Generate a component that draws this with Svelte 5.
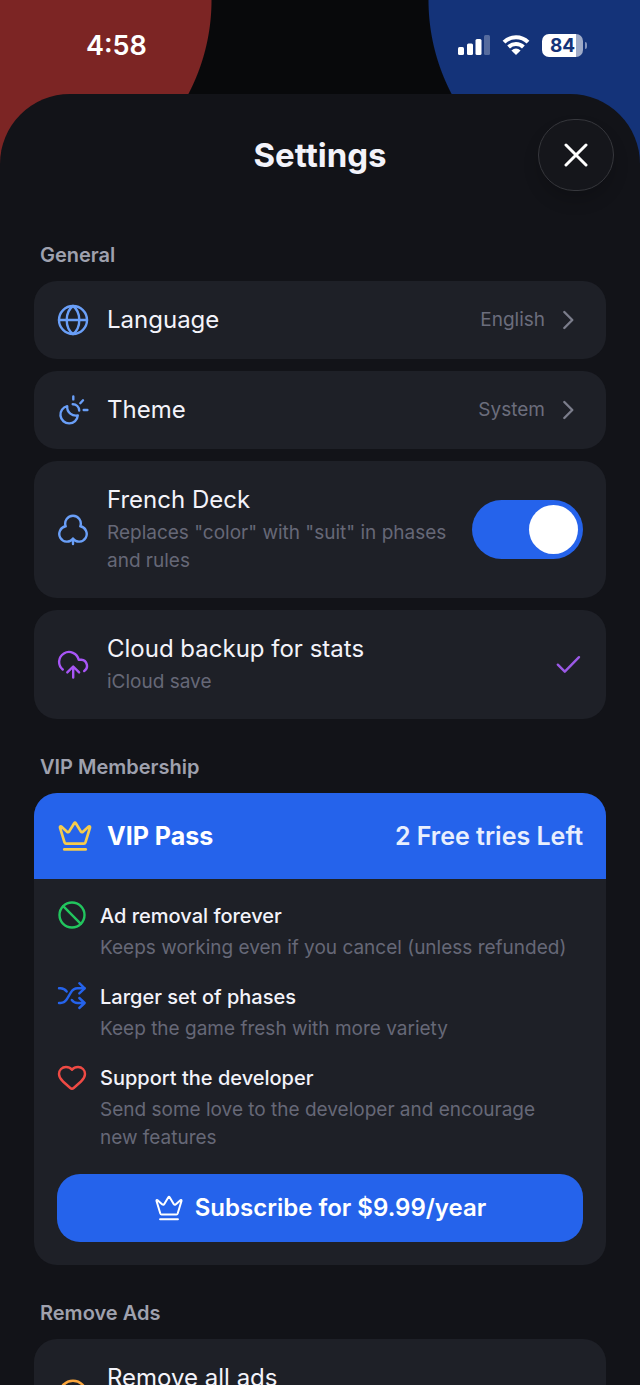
<script lang="ts">
	type Icon = 'globe' | 'theme' | 'club' | 'cloud' | 'ban' | 'shuffle' | 'heart' | 'crown' | 'chevron' | 'check';

	interface Feature {
		icon: Icon;
		color: string;
		title: string;
		text: string;
	}

	const features: Feature[] = [
		{
			icon: 'ban',
			color: 'green',
			title: 'Ad removal forever',
			text: 'Keeps working even if you cancel (unless refunded)'
		},
		{
			icon: 'shuffle',
			color: 'blue',
			title: 'Larger set of phases',
			text: 'Keep the game fresh with more variety'
		},
		{
			icon: 'heart',
			color: 'red',
			title: 'Support the developer',
			text: 'Send some love to the developer and encourage new features'
		}
	];

	const preferences: { icon: Icon; title: string; value: string }[] = [
		{ icon: 'globe', title: 'Language', value: 'English' },
		{ icon: 'theme', title: 'Theme', value: 'System' }
	];

	let frenchDeck = $state(true);
	let cloudBackup = $state(true);
	let open = $state(true);
</script>

{#snippet icon(name: Icon, color: string)}
	{#if name === 'globe'}
		<svg class="icon {color}" viewBox="0 0 32 32" aria-hidden="true">
			<circle cx="16" cy="16" r="14" />
			<path d="M16 2C12 5 9.7 10.5 9.7 16S12 27 16 30M16 2c4 3 6.3 8.5 6.3 14S20 27 16 30M2 16h28" />
		</svg>
	{:else if name === 'theme'}
		<svg class="icon {color}" viewBox="0 0 32 32" aria-hidden="true">
			<path d="M10.2 12.2A8.7 8.7 0 1 0 20.8 21.4C15.5 22.4 9.6 18.6 10.2 12.2Z" />
			<path d="M15.7 10.2A6.3 6.3 0 0 1 22.2 16.6M16.3 2.4v3M23.3 9.2l2.7-2.9M26.7 16h3.7" />
		</svg>
	{:else if name === 'club'}
		<svg class="icon {color}" viewBox="0 0 32 32" aria-hidden="true">
			<path d="M8.7 12.3A7.8 7.8 0 1 1 23.3 12.3A7.7 7.7 0 1 1 16 24.7A7.7 7.7 0 1 1 8.7 12.3Z" />
			<path d="M16 24.7V30" />
		</svg>
	{:else if name === 'cloud'}
		<svg class="icon {color}" viewBox="0 0 32 32" aria-hidden="true">
			<path d="M5.7 20.5A9.9 9.9 0 1 1 21.7 10.8H24.3A6.1 6.1 0 0 1 27.2 22" />
			<path d="M16.2 28.6V17.6M10.3 23.4l5.9-5.9 5.9 5.9" />
		</svg>
	{:else if name === 'ban'}
		<svg class="icon {color}" viewBox="0 0 30 30" aria-hidden="true">
			<circle cx="15" cy="15" r="12.5" />
			<path d="M6.2 6.2l17.6 17.6" />
		</svg>
	{:else if name === 'shuffle'}
		<svg class="icon {color}" viewBox="0 0 30 30" aria-hidden="true">
			<path d="M2 7.3h1.5c2.5 0 4.6 1.1 6.2 3.2M2 22h1.5c3.2 0 5.2-1.6 6.7-4.3l3.6-6.1c1.6-2.7 3.6-4.3 6.7-4.3H27.5" />
			<path d="M14.8 19c1.5 2 3.3 3 5.7 3H27.5M22.3 2.2l5.4 5.1-5.4 5.1M22.3 17l5.4 5-5.4 5" />
		</svg>
	{:else if name === 'heart'}
		<svg class="icon {color}" viewBox="0 0 30 30" aria-hidden="true">
			<path d="M15 7.8C13.3 5.7 11.5 5 9 5 5 5 2 8 2 12c0 3 1.5 5.2 4 7.5l7.3 6.5c1 .9 2.4.9 3.4 0L24 19.5c2.5-2.3 4-4.5 4-7.5 0-4-3-7-7-7-2.5 0-4.3.7-6 2.8Z" />
		</svg>
	{:else if name === 'crown'}
		<svg class="icon {color}" viewBox="0 0 36 36" aria-hidden="true">
			<path d="M3 9.6Q2.7 8 4.3 8.6L10 13.8Q11.3 14.7 12.2 13.4L17.2 5.2Q18 4 18.8 5.2L23.8 13.4Q24.7 14.7 26 13.8L31.7 8.6Q33.3 8 33 9.6L28.4 24.6Q28 25.7 27 25.7H9Q8 25.7 7.6 24.6Z" />
			<path d="M7.3 31.4h21.4" />
		</svg>
	{:else if name === 'chevron'}
		<svg class="icon {color}" viewBox="0 0 30 30" aria-hidden="true">
			<path d="M11.3 7l8 8-8 8" />
		</svg>
	{:else}
		<svg class="icon {color}" viewBox="0 0 30 30" aria-hidden="true">
			<path d="M4.8 14.7l7 7L26 7.2" />
		</svg>
	{/if}
{/snippet}

<div class="screen">
	<div class="status-bar">
		<span class="time">4:58</span>
		<div class="status-icons">
			<svg class="signal" viewBox="0 0 32 20" aria-hidden="true">
				<rect x="0" y="12" width="6" height="8" rx="1.5" />
				<rect x="9" y="8.5" width="6" height="11.5" rx="1.5" />
				<rect x="17.5" y="4" width="6" height="16" rx="1.5" />
				<rect class="faded" x="26" y="0" width="6" height="20" rx="1.5" />
			</svg>
			<svg class="wifi" viewBox="0 0 28 20" aria-hidden="true">
				<path class="arc" d="M2 7.2A17 17 0 0 1 26 7.2M6.6 12A10.6 10.6 0 0 1 21.4 12" />
				<path class="dot" d="M9.4 15.6Q14 11.6 18.6 15.6L14 20Z" />
			</svg>
			<div class="battery">
				<span class="battery-level">84</span>
				<span class="battery-tip"></span>
			</div>
		</div>
	</div>

	{#if open}
		<main class="sheet">
			<header class="sheet-header">
				<h1>Settings</h1>
				<button class="close" aria-label="Close" onclick={() => (open = false)}>
					<svg viewBox="0 0 24 24" aria-hidden="true">
						<path d="M2 2l20 20M22 2l-20 20" />
					</svg>
				</button>
			</header>

			<section>
				<h2>General</h2>
				<div class="cards">
					{#each preferences as pref}
						<button class="card row">
							{@render icon(pref.icon, 'sky')}
							<span class="title">{pref.title}</span>
							<span class="value">
								{pref.value}
								{@render icon('chevron', 'grey')}
							</span>
						</button>
					{/each}

					<label class="card row">
						{@render icon('club', 'sky')}
						<span class="text">
							<span class="title">French Deck</span>
							<span class="sub">Replaces "color" with "suit" in phases and rules</span>
						</span>
						<input class="toggle" type="checkbox" role="switch" bind:checked={frenchDeck} />
					</label>

					<button class="card row" aria-pressed={cloudBackup} onclick={() => (cloudBackup = !cloudBackup)}>
						{@render icon('cloud', 'purple')}
						<span class="text">
							<span class="title">Cloud backup for stats</span>
							<span class="sub">iCloud save</span>
						</span>
						{#if cloudBackup}
							<span class="value">{@render icon('check', 'violet')}</span>
						{/if}
					</button>
				</div>
			</section>

			<section>
				<h2>VIP Membership</h2>
				<div class="card vip">
					<div class="vip-header">
						{@render icon('crown', 'gold')}
						<h3>VIP Pass</h3>
						<span class="tries">2 Free tries Left</span>
					</div>
					<div class="vip-body">
						<ul>
							{#each features as feature}
								<li>
									{@render icon(feature.icon, feature.color)}
									<div class="feature-text">
										<h4>{feature.title}</h4>
										<p class="sub">{feature.text}</p>
									</div>
								</li>
							{/each}
						</ul>
						<button class="subscribe">
							{@render icon('crown', 'white')}
							Subscribe for $9.99/year
						</button>
					</div>
				</div>
			</section>

			<section>
				<h2>Remove Ads</h2>
				<div class="cards">
					<button class="card row">
						{@render icon('ban', 'orange')}
						<span class="text">
							<span class="title">Remove all ads</span>
							<span class="sub">&nbsp;</span>
						</span>
					</button>
				</div>
			</section>
		</main>
	{/if}
</div>

<style>
	:global(body) {
		background: #08090b;
	}

	.screen {
		display: flex;
		flex-direction: column;
		height: 100vh;
		overflow: hidden;
		font-family: Inter, 'Liberation Sans', sans-serif;
		color: #f3f3fa;
		/* two table discs peeking out behind the sheet */
		background:
			radial-gradient(circle at 9px 0, #7c2524 202px, transparent 203px),
			radial-gradient(circle at calc(100% - 9px) 0, #143379 202px, transparent 203px),
			#08090b;
	}

	button {
		border: 0;
		font: inherit;
		color: inherit;
		text-align: left;
		cursor: pointer;
	}

	h1,
	h2,
	h3,
	h4,
	p,
	ul {
		margin: 0;
		padding: 0;
	}

	/* Status bar */
	.status-bar {
		flex: none;
		display: flex;
		align-items: center;
		justify-content: space-between;
		box-sizing: border-box;
		height: 94px;
		padding: 0 57px 4px 86px;
		color: #fff;
	}

	.time {
		font-size: 27px;
		font-weight: 600;
	}

	.status-icons {
		display: flex;
		align-items: center;
		gap: 12px;
	}

	.signal {
		width: 32px;
		height: 20px;
		fill: #fff;
	}

	.faded {
		opacity: 0.28;
	}

	.wifi {
		width: 28px;
		height: 20px;
		fill: none;
	}

	.arc {
		stroke: #fff;
		stroke-width: 4;
	}

	.dot {
		fill: #fff;
	}

	.battery {
		position: relative;
		width: 41px;
		height: 23px;
		border-radius: 7px;
		background: linear-gradient(90deg, #fff 84%, #9fabc8 84%);
		text-align: center;
	}

	.battery-level {
		font-size: 19px;
		font-weight: 700;
		line-height: 23px;
		color: #143379;
	}

	.battery-tip {
		position: absolute;
		top: 8px;
		right: -4px;
		width: 2px;
		height: 7px;
		border-radius: 0 2px 2px 0;
		background: #8394bd;
	}

	/* Sheet */
	.sheet {
		flex: 1;
		min-height: 0;
		overflow: hidden;
		padding: 0 34px;
		border-radius: 70px 70px 0 0;
		background: #121318;
	}

	.sheet-header {
		display: grid;
		grid-template-columns: 1fr auto 1fr;
		align-items: center;
		margin: 25px -8px 50px;
	}

	h1 {
		grid-column: 2;
		font-size: 33px;
		font-weight: 700;
		line-height: 40px;
	}

	.close {
		justify-self: end;
		display: flex;
		align-items: center;
		justify-content: center;
		box-sizing: border-box;
		width: 76px;
		height: 72px;
		padding: 0;
		border: 1px solid #37383d;
		border-radius: 36px;
		background: #15161b;
		box-shadow: 0 10px 16px rgba(0, 0, 0, 0.16);
	}

	.close svg {
		width: 24px;
		height: 24px;
		fill: none;
		stroke: #fff;
		stroke-width: 3;
		stroke-linecap: round;
	}

	section {
		margin-bottom: 34px;
	}

	h2 {
		margin: 0 6px 12px;
		font-size: 20px;
		font-weight: 600;
		line-height: 28px;
		color: #9fa1ae;
	}

	.cards {
		display: flex;
		flex-direction: column;
		gap: 12px;
	}

	.card {
		border-radius: 23px;
		background: #1e2027;
	}

	.row {
		display: flex;
		align-items: center;
		gap: 18px;
		padding: 23px;
		cursor: pointer;
	}

	.text {
		flex: 1;
		display: flex;
		flex-direction: column;
		gap: 3px;
	}

	.title {
		font-size: 24px;
		line-height: 32px;
	}

	.sub {
		font-size: 19px;
		line-height: 28px;
		color: #666877;
	}

	.value {
		display: flex;
		align-items: center;
		gap: 8px;
		margin-left: auto;
		font-size: 19px;
		line-height: 28px;
		color: #6b6d7c;
	}

	.toggle {
		flex: none;
		appearance: none;
		display: flex;
		box-sizing: border-box;
		width: 111px;
		height: 59px;
		margin: 0;
		padding: 5px;
		border-radius: 30px;
		background: #3a3c46;
		cursor: pointer;
	}

	.toggle::before {
		content: '';
		width: 49px;
		border-radius: 50%;
		background: #fff;
	}

	.toggle:checked {
		justify-content: flex-end;
		background: #2563eb;
	}

	/* Icons */
	.icon {
		flex: none;
		width: 32px;
		height: 32px;
		fill: none;
		stroke: currentColor;
		stroke-width: 2.4;
		stroke-linecap: round;
		stroke-linejoin: round;
	}

	.value .icon,
	.vip-body .icon {
		width: 30px;
		height: 30px;
	}

	.sky { color: #6a9ff8; }
	.blue { color: #2563eb; }
	.purple { color: #a855f7; }
	.violet { color: #9b59e6; }
	.green { color: #22c55e; }
	.red { color: #ef4a44; }
	.gold { color: #f6cc4c; }
	.orange { color: #fba63c; }
	.grey { color: #7b7d8b; }
	.white { color: #fff; }

	/* VIP card */
	.vip {
		overflow: hidden;
	}

	.vip-header {
		display: flex;
		align-items: center;
		gap: 14px;
		padding: 25px 23px;
		background: #2563eb;
	}

	.vip-header .icon {
		width: 36px;
		height: 36px;
		stroke-width: 2.7;
	}

	h3 {
		font-size: 25px;
		font-weight: 700;
		line-height: 32px;
		color: #fff;
	}

	.tries {
		margin-left: auto;
		font-size: 25px;
		font-weight: 600;
		line-height: 32px;
		color: #e9effd;
	}

	.vip-body {
		padding: 21px 23px 23px;
	}

	ul {
		display: flex;
		flex-direction: column;
		gap: 19px;
		margin-bottom: 22px;
		list-style: none;
	}

	li {
		display: flex;
		gap: 13px;
	}

	.feature-text {
		display: flex;
		flex-direction: column;
		gap: 2px;
		padding-right: 10px;
	}

	h4 {
		font-size: 20px;
		font-weight: 500;
		line-height: 32px;
	}

	.subscribe {
		display: flex;
		align-items: center;
		justify-content: center;
		gap: 11px;
		width: 100%;
		padding: 18px;
		border-radius: 23px;
		background: #2563eb;
		font-size: 24px;
		font-weight: 600;
		line-height: 32px;
		color: #fff;
	}
</style>
